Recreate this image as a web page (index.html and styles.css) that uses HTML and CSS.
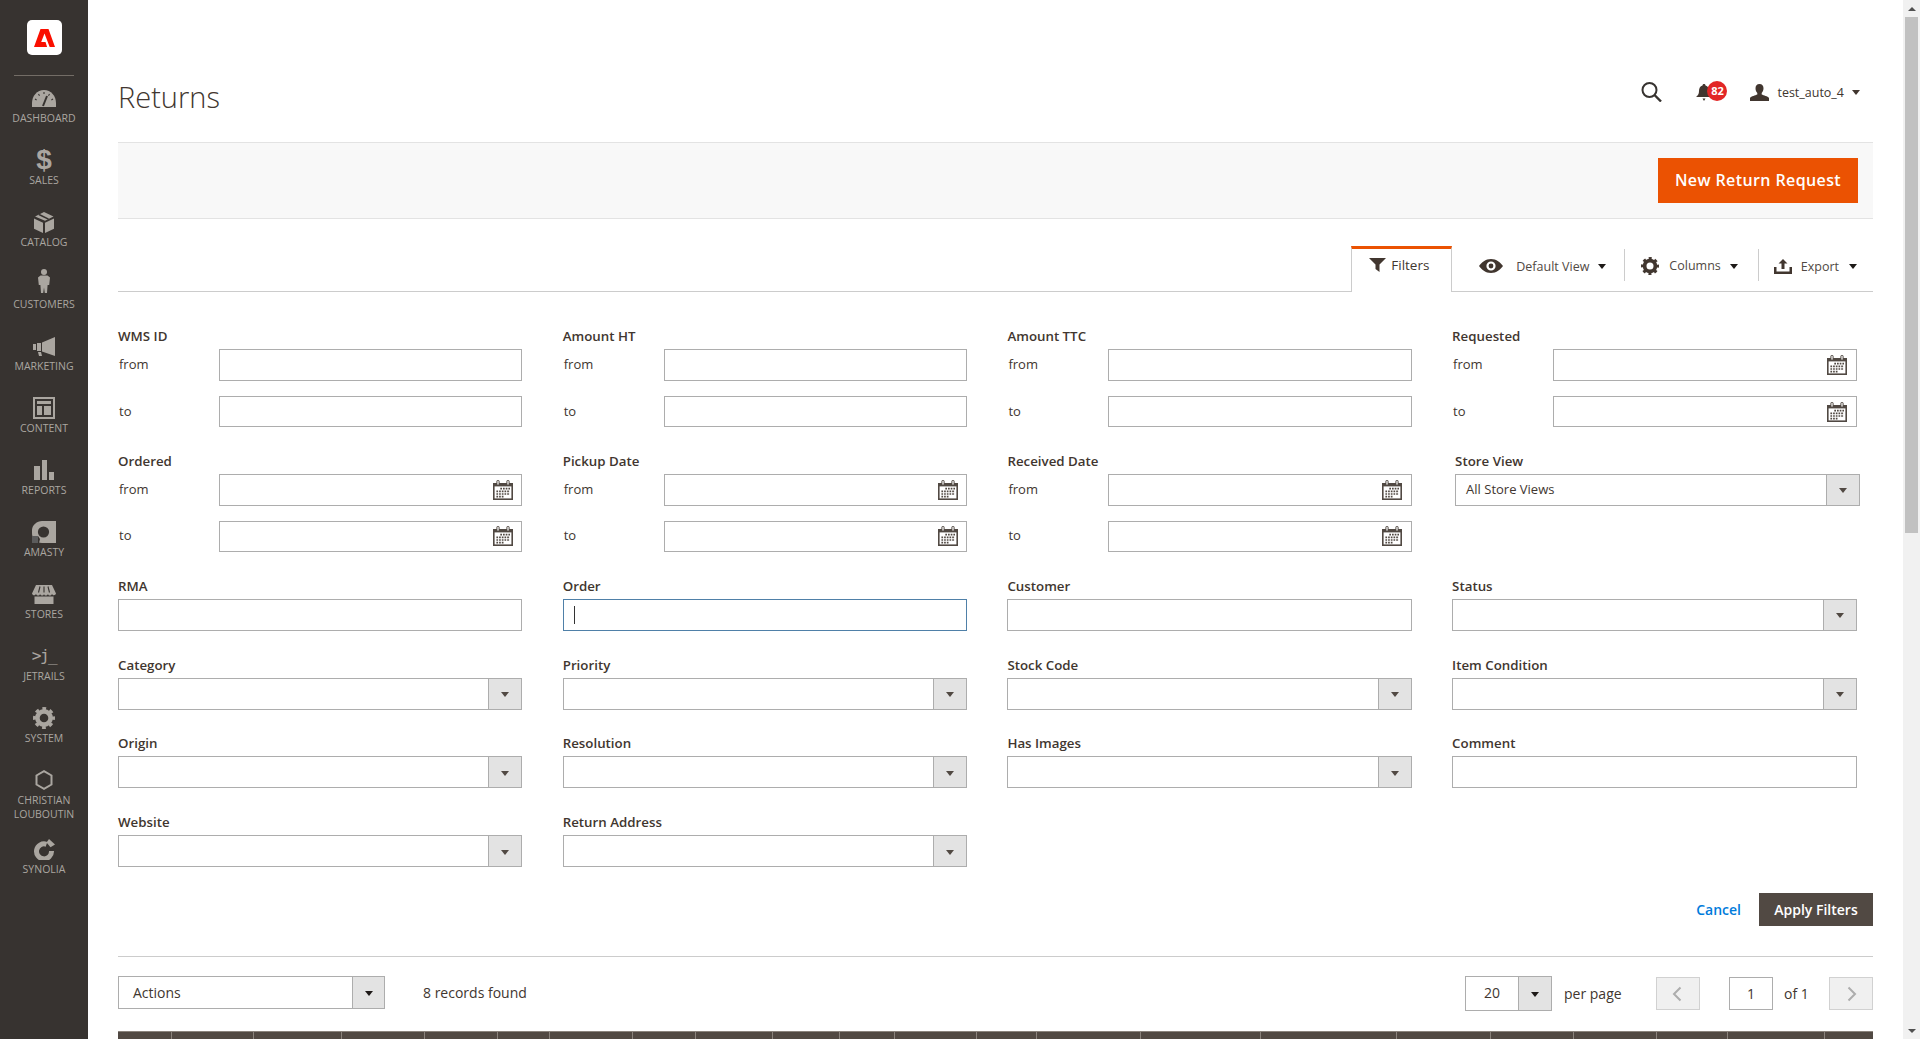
FILE: index.html
```html
<!DOCTYPE html>
<html lang="en">
<head>
<meta charset="utf-8">
<title>Returns</title>
<link rel="stylesheet" href="styles.css">
</head>
<body>
<svg class="defs" width="0" height="0" aria-hidden="true">
  <symbol id="i-cal" viewBox="0 0 20 20">
    <path fill="#514943" d="M0 3h3.4V1.6a1.6 1.6 0 0 1 3.2 0V3h6.8V1.6a1.6 1.6 0 0 1 3.2 0V3H20v17H0z"/>
    <rect x="1.6" y="6.4" width="16.8" height="12" fill="#fff"/>
    <rect x="4.4" y="1" width="1.2" height="3.6" fill="#fff"/>
    <rect x="14.4" y="1" width="1.2" height="3.6" fill="#fff"/>
    <path stroke="#514943" stroke-width="1.7" stroke-dasharray="1.7 1" fill="none" d="M7.3 8.6H17M3.4 11.3H17M3.4 14H17M3.4 16.6H11"/>
  </symbol>
  <symbol id="i-gear" viewBox="0 0 24 24">
    <circle cx="12" cy="12" r="7.2" fill="none" stroke="currentColor" stroke-width="5"/>
    <circle cx="12" cy="12" r="10" fill="none" stroke="currentColor" stroke-width="4" stroke-dasharray="3.95 3.9" stroke-dashoffset="2"/>
  </symbol>
</svg>
<div class="app">
  <nav class="sidebar">
    <div class="logo-wrap">
      <div class="logo">
        <svg width="21" height="18" viewBox="0 0 21 18"><path fill="#fa0f00" d="M6.5 0h8L21 18h-5.3L10.5 4.6 7.2 13h4.3l1.6 5H0z"/></svg>
      </div>
    </div>
    <ul class="nav">
      <li class="nav-item"><span class="nav-icon"><svg width="24" height="17" viewBox="0 0 24 17"><path fill="currentColor" d="M12 0C5 0 0 6 0 13v4h24v-4C24 6 19 0 12 0z"/><path stroke="#373330" stroke-width="1.1" d="M12 2v2M6.5 4l1 1.7M3 9l1.6 1M17.5 4l-1 1.7M21 9l-1.6 1"/><path stroke="#373330" stroke-width="2" d="M11 16l4-10"/></svg></span><span class="nav-label">Dashboard</span></li>
      <li class="nav-item"><span class="nav-icon nav-glyph">$</span><span class="nav-label">Sales</span></li>
      <li class="nav-item"><span class="nav-icon"><svg width="20" height="21" viewBox="0 0 20 21"><path fill="currentColor" d="M0 6.5l9 4.2V21l-9-4.2zM20 6.5l-9 4.2V21l9-4.2zM10 0l9.5 4.6-8.5 4.2L1 4.4z"/><path stroke="#373330" stroke-width="1.6" d="M5 2.5l9.5 4.6"/></svg></span><span class="nav-label">Catalog</span></li>
      <li class="nav-item"><span class="nav-icon"><svg class="nav-person" width="12" height="24" viewBox="0 0 12 24"><circle cx="6" cy="3" r="3" fill="currentColor"/><path fill="currentColor" d="M2.5 6.6h7L12 8.5l-.8 7.5H9.6L9 24H6.8L6 18.5 5.2 24H3l-.6-8H.8L0 8.5z"/></svg></span><span class="nav-label">Customers</span></li>
      <li class="nav-item"><span class="nav-icon"><svg width="22" height="19" viewBox="0 0 22 19"><path fill="currentColor" d="M0 7h3v6H0zM4 6h4v8H4zM9 5.5L22 0v19L9 14.5zM5 15h3l1 4H6z"/></svg></span><span class="nav-label">Marketing</span></li>
      <li class="nav-item"><span class="nav-icon"><svg width="22" height="22" viewBox="0 0 22 22"><path fill="currentColor" fill-rule="evenodd" d="M0 0h22v22H0zM2 2v18h18V2z"/><path fill="currentColor" d="M4 4h14v3H4zM4 9h5v9H4zM11 9h7v9h-7z"/></svg></span><span class="nav-label">Content</span></li>
      <li class="nav-item"><span class="nav-icon"><svg width="20" height="20" viewBox="0 0 20 20"><path fill="currentColor" d="M0 6h6v14H0zM8 0h5v20H8zM15 12h5v8h-5z"/></svg></span><span class="nav-label">Reports</span></li>
      <li class="nav-item"><span class="nav-icon"><svg width="24" height="22" viewBox="0 0 24 22"><path fill="currentColor" d="M10 0h14v22H10C4 22 0 18 0 12V9C0 4 5 0 10 0z"/><circle cx="11.5" cy="11" r="5.6" fill="#373330"/><path fill="#373330" d="M6 15l2 3-1 4H5z"/><rect y="15" width="6" height="7" fill="#5c5c5c"/></svg></span><span class="nav-label">Amasty</span></li>
      <li class="nav-item"><span class="nav-icon"><svg width="24" height="19" viewBox="0 0 24 19"><path fill="currentColor" d="M4 0h16l4 8.5c-.5 2-3 2.4-4 .5-1 2-3.500 2-4 0-1 2-3.500 2-4 0-.5 2-3 2-4 0-.5 2-3 2-4 0-1 2-3.500 1.500-4-.5zM2.500 11.500h19V19h-19z"/><path stroke="#373330" stroke-width="1.100" d="M8 1.500L6.500 7.500M12 1.500v6M16 1.500l1.500 6"/></svg></span><span class="nav-label">Stores</span></li>
      <li class="nav-item"><span class="nav-icon nav-text">&gt;j_</span><span class="nav-label">JetRails</span></li>
      <li class="nav-item"><span class="nav-icon"><svg class="nav-gear" width="22" height="22"><use href="#i-gear"/></svg></span><span class="nav-label">System</span></li>
      <li class="nav-item nav-item-wrap"><span class="nav-icon"><svg width="18" height="20" viewBox="0 0 18 20"><path fill="none" stroke="currentColor" stroke-width="2" d="M9 1.200l7.500 4.300v9L9 18.800l-7.500-4.300v-9z"/></svg></span><span class="nav-label">Christian<br>Louboutin</span></li>
      <li class="nav-item"><span class="nav-icon"><svg width="22" height="21" viewBox="0 0 22 21"><path fill="none" stroke="currentColor" stroke-width="5" d="M13.500 5.300A7.500 7.500 0 1 0 18.500 12"/><path fill="currentColor" d="M16 0l6 5.500-4.500 2.800-4-4.800z"/></svg></span><span class="nav-label">Synolia</span></li>
    </ul>
  </nav>

  <main class="main">
    <header class="page-header">
      <h1 class="page-title">Returns</h1>
      <div class="header-actions">
        <svg class="icon-search" width="22" height="20" viewBox="0 0 22 20"><circle cx="8.500" cy="8" r="7" fill="none" stroke="#373330" stroke-width="2"/><path stroke="#373330" stroke-width="2.400" d="M13.500 13l6.500 6.500"/></svg>
        <span class="bell">
          <svg width="16" height="17" viewBox="0 0 16 17"><path fill="#41362f" d="M8 0c1 0 1.500.6 1.500 1.500C12 2.200 13 4.500 13 7c0 3 1 4.500 3 6H0c2-1.500 3-3 3-6 0-2.500 1-4.800 3.500-5.500C6.500.6 7 0 8 0zM6.500 14.500h3L8 17z"/></svg>
          <span class="badge">82</span>
        </span>
        <svg class="icon-user" width="19" height="17" viewBox="0 0 19 17"><path fill="#41362f" d="M9.500 0c2.700 0 4 1.800 4 4.300 0 2-.8 3.700-1.800 4.700v1.500c2 1 6 1.500 7.300 3.500V17H0v-3c1.300-2 5.300-2.500 7.300-3.500V9c-1-1-1.800-2.700-1.800-4.700C5.500 1.800 6.800 0 9.500 0z"/></svg>
        <span class="user-name">test_auto_4</span>
        <span class="caret caret-user"></span>
      </div>
    </header>

    <section class="page-toolbar">
      <a class="btn-primary">New Return Request</a>
    </section>

    <section class="grid-tabs">
      <div class="tab-active">
        <svg width="17" height="14" viewBox="0 0 17 14"><path fill="#41362f" d="M0 0h17l-6.500 6.500V14l-4-3V6.500z"/></svg>
        <span>Filters</span>
      </div>
      <div class="tool tool-view">
        <svg width="24" height="14" viewBox="0 0 24 14"><path fill="#41362f" fill-rule="evenodd" d="M12 0c5.500 0 9.500 3.500 12 7-2.500 3.500-6.500 7-12 7S2.500 10.500 0 7c2.500-3.500 6.500-7 12-7zm0 2.400a4.600 4.600 0 1 0 0 9.200 4.600 4.600 0 0 0 0-9.200z"/><circle cx="12" cy="7" r="2.400" fill="#41362f"/></svg>
        <span class="tool-text tool-text-view">Default View</span>
        <span class="caret caret-tool"></span>
      </div>
      <div class="tool tool-columns">
        <svg class="tool-gear" width="18" height="18"><use href="#i-gear"/></svg>
        <span class="tool-text tool-text-columns">Columns</span>
        <span class="caret caret-tool"></span>
      </div>
      <div class="tool tool-export">
        <svg width="18" height="15" viewBox="0 0 18 15"><path fill="#41362f" d="M0 8h2.500v4.500h13V8H18v7H0zM9 0l4.500 4.500H10.500V10h-3V4.500H4.500z"/></svg>
        <span class="tool-text tool-text-export">Export</span>
        <span class="caret caret-tool"></span>
      </div>
    </section>

    <form class="filters">
      <div class="filter-grid">
        <div class="field">
          <div class="field-label">WMS ID</div>
          <div class="range-row"><span class="range-name">from</span><input class="input" type="text"></div>
          <div class="range-row range-to"><span class="range-name">to</span><input class="input" type="text"></div>
        </div>
        <div class="field">
          <div class="field-label">Amount HT</div>
          <div class="range-row"><span class="range-name">from</span><input class="input" type="text"></div>
          <div class="range-row range-to"><span class="range-name">to</span><input class="input" type="text"></div>
        </div>
        <div class="field">
          <div class="field-label">Amount TTC</div>
          <div class="range-row"><span class="range-name">from</span><input class="input" type="text"></div>
          <div class="range-row range-to"><span class="range-name">to</span><input class="input" type="text"></div>
        </div>
        <div class="field">
          <div class="field-label">Requested</div>
          <div class="range-row"><span class="range-name">from</span><div class="input date-input"><svg width="20" height="20"><use href="#i-cal"/></svg></div></div>
          <div class="range-row range-to"><span class="range-name">to</span><div class="input date-input"><svg width="20" height="20"><use href="#i-cal"/></svg></div></div>
        </div>

        <div class="field">
          <div class="field-label">Ordered</div>
          <div class="range-row"><span class="range-name">from</span><div class="input date-input"><svg width="20" height="20"><use href="#i-cal"/></svg></div></div>
          <div class="range-row range-to"><span class="range-name">to</span><div class="input date-input"><svg width="20" height="20"><use href="#i-cal"/></svg></div></div>
        </div>
        <div class="field">
          <div class="field-label">Pickup Date</div>
          <div class="range-row"><span class="range-name">from</span><div class="input date-input"><svg width="20" height="20"><use href="#i-cal"/></svg></div></div>
          <div class="range-row range-to"><span class="range-name">to</span><div class="input date-input"><svg width="20" height="20"><use href="#i-cal"/></svg></div></div>
        </div>
        <div class="field">
          <div class="field-label">Received Date</div>
          <div class="range-row"><span class="range-name">from</span><div class="input date-input"><svg width="20" height="20"><use href="#i-cal"/></svg></div></div>
          <div class="range-row range-to"><span class="range-name">to</span><div class="input date-input"><svg width="20" height="20"><use href="#i-cal"/></svg></div></div>
        </div>
        <div class="field field-store">
          <div class="field-label">Store View</div>
          <div class="select"><span class="select-value">All Store Views</span><span class="select-arrow"><span class="caret"></span></span></div>
        </div>

        <div class="field"><div class="field-label">RMA</div><input class="input" type="text"></div>
        <div class="field"><div class="field-label">Order</div><div class="input input-focus"><span class="text-caret"></span></div></div>
        <div class="field"><div class="field-label">Customer</div><input class="input" type="text"></div>
        <div class="field"><div class="field-label">Status</div><div class="select"><span class="select-value"></span><span class="select-arrow"><span class="caret"></span></span></div></div>

        <div class="field"><div class="field-label">Category</div><div class="select"><span class="select-value"></span><span class="select-arrow"><span class="caret"></span></span></div></div>
        <div class="field"><div class="field-label">Priority</div><div class="select"><span class="select-value"></span><span class="select-arrow"><span class="caret"></span></span></div></div>
        <div class="field"><div class="field-label">Stock Code</div><div class="select"><span class="select-value"></span><span class="select-arrow"><span class="caret"></span></span></div></div>
        <div class="field"><div class="field-label">Item Condition</div><div class="select"><span class="select-value"></span><span class="select-arrow"><span class="caret"></span></span></div></div>

        <div class="field"><div class="field-label">Origin</div><div class="select"><span class="select-value"></span><span class="select-arrow"><span class="caret"></span></span></div></div>
        <div class="field"><div class="field-label">Resolution</div><div class="select"><span class="select-value"></span><span class="select-arrow"><span class="caret"></span></span></div></div>
        <div class="field"><div class="field-label">Has Images</div><div class="select"><span class="select-value"></span><span class="select-arrow"><span class="caret"></span></span></div></div>
        <div class="field"><div class="field-label">Comment</div><input class="input" type="text"></div>

        <div class="field"><div class="field-label">Website</div><div class="select"><span class="select-value"></span><span class="select-arrow"><span class="caret"></span></span></div></div>
        <div class="field"><div class="field-label">Return Address</div><div class="select"><span class="select-value"></span><span class="select-arrow"><span class="caret"></span></span></div></div>
      </div>
      <div class="filter-actions">
        <a class="link-cancel">Cancel</a>
        <a class="btn-apply">Apply Filters</a>
      </div>
    </form>

    <section class="pager-row">
      <div class="mass-select"><span class="mass-value">Actions</span><span class="select-arrow"><span class="caret caret-black"></span></span></div>
      <span class="records">8 records found</span>
      <div class="pager">
        <div class="per-page"><span class="per-value">20</span><span class="select-arrow"><span class="caret caret-black"></span></span></div>
        <span class="per-label">per page</span>
        <span class="page-btn page-prev"><svg width="10" height="16" viewBox="0 0 10 16"><path fill="none" stroke="#adadad" stroke-width="2" d="M8.500 1.500L2 8l6.500 6.500"/></svg></span>
        <span class="page-input">1</span>
        <span class="page-of">of 1</span>
        <span class="page-btn page-next"><svg width="10" height="16" viewBox="0 0 10 16"><path fill="none" stroke="#adadad" stroke-width="2" d="M1.500 1.500L8 8l-6.500 6.500"/></svg></span>
      </div>
    </section>

    <div class="table-head">
      <span></span><span></span><span></span><span></span><span></span><span></span><span></span><span></span><span></span><span></span><span></span>
      <span></span><span></span><span></span><span></span><span></span><span></span><span></span><span></span><span></span><span></span><span></span>
    </div>
  </main>

  <aside class="scrollbar" aria-hidden="true">
    <span class="scroll-btn"><span class="scroll-up"></span></span>
    <span class="scroll-thumb"></span>
    <span class="scroll-track"></span>
    <span class="scroll-btn"><span class="scroll-down"></span></span>
  </aside>
</div>
</body>
</html>
```

FILE: styles.css
```css
* { box-sizing: border-box; }
html, body { margin: 0; height: 100%; overflow: hidden; }
body { font-family: "Open Sans", "Noto Sans", sans-serif; font-size: 13px; color: #41362f; background: #fff; }
.defs { position: absolute; }
.app { display: flex; height: 1039px; overflow: hidden; }

/* sidebar */
.sidebar { flex: 0 0 88px; background: #373330; color: #aaa6a0; }
.logo-wrap { height: 76px; margin: 0 14px; padding-top: 20px; border-bottom: 1px solid #736d66; display: flex; justify-content: center; align-items: flex-start; }
.logo { width: 35px; height: 35px; background: #fff; border-radius: 5px; display: flex; align-items: center; justify-content: center; }
.nav { list-style: none; margin: 9px 0 0; padding: 0; }
.nav-item { display: flex; flex-direction: column; align-items: center; padding-bottom: 22px; }
.nav-item-wrap { padding-bottom: 15px; }
.nav-icon { height: 26px; display: flex; align-items: center; justify-content: center; }
.nav-person { margin-bottom: 6px; }
.nav-glyph { font-family: "Liberation Sans", sans-serif; font-weight: 700; font-size: 28px; line-height: 26px; }
.nav-text { font-family: "DejaVu Sans Mono", monospace; font-size: 16px; line-height: 26px; letter-spacing: -1.5px; }
.nav-gear { color: #aaa6a0; }
.nav-label { font-size: 10.5px; line-height: 14px; text-transform: uppercase; text-align: center; white-space: nowrap; }

/* main */
.main { flex: 1 1 auto; min-width: 0; padding: 0 30px; overflow: hidden; }
.page-header { height: 142px; padding: 53px 0 1px; display: flex; align-items: center; justify-content: space-between; }
.page-title { margin: 0; font-size: 29px; font-weight: 300; color: #41362f; line-height: 36px; }
.header-actions { display: flex; align-items: center; padding-right: 13px; margin: 2px 0 12px; }
.icon-search { margin-right: 33px; margin-left: 1px; }
.bell { position: relative; display: flex; margin-right: 38px; }
.badge { position: absolute; left: 11px; top: -3px; width: 20px; height: 20px; border-radius: 50%; background: #e22626; color: #fff; font-size: 11px; font-weight: 700; line-height: 20px; text-align: center; }
.icon-user { margin-right: 8px; }
.user-name { font-size: 12.5px; color: #41362f; }
.caret { display: inline-block; width: 0; height: 0; border-left: 4px solid transparent; border-right: 4px solid transparent; border-top: 5px solid #514943; }
.caret-black { border-top-color: #1e1a18; }
.caret-user { margin-left: 8px; border-top-color: #41362f; }
.caret-tool { border-top-color: #1e1a18; }

.page-toolbar { height: 77px; background: #f8f8f8; border-top: 1px solid #e3e3e3; border-bottom: 1px solid #e3e3e3; display: flex; justify-content: flex-end; align-items: center; padding-right: 15px; }
.btn-primary { width: 200px; height: 45px; padding-bottom: 2px; background: #eb5202; color: #fff; font-size: 16px; font-weight: 600; letter-spacing: .4px; display: flex; align-items: center; justify-content: center; }

.grid-tabs { margin-top: 27px; height: 46px; border-bottom: 1px solid #ccc; display: flex; justify-content: flex-end; align-items: flex-start; padding-right: 16px; }
.tab-active { flex: 0 0 101px; height: 46px; border: 1px solid #ccc; border-top: 3px solid #eb5202; border-bottom: 0; background: #fff; display: flex; align-items: center; padding: 0 0 12px 17px; gap: 5px; font-size: 13.5px; }
.tool { display: flex; align-items: center; height: 32px; margin-top: 3px; padding-top: 2px; }
.tool-view { padding-left: 27px; padding-right: 18px; border-right: 1px solid #ccc; }
.tool-columns { padding-left: 16px; padding-right: 20px; border-right: 1px solid #ccc; }
.tool-export { padding-left: 15px; }
.tool-gear { color: #41362f; }
.tool-text { font-size: 12.5px; color: #514943; }
.tool-text-view { margin: 0 9px 0 13px; }
.tool-text-columns { margin: -2px 9px 0 10px; }
.tool-text-export { margin: 0 10px 0 9px; }

/* filters */
.filters { margin-top: 32px; border-bottom: 1px solid #ccc; padding-bottom: 30px; }
.filter-grid { display: grid; grid-template-columns: repeat(4, 1fr); column-gap: 40.33px; row-gap: 21.86px; padding-right: 16.5px; }
.field { min-width: 0; }
.field-store { margin: 0 -3px 0 3px; }
.field-label { height: 25px; line-height: 24px; font-size: 13.3px; font-weight: 600; color: #41362f; }
.range-row { display: flex; height: 32px; align-items: center; }
.range-to { margin-top: 15px; height: 31px; }
.range-name { flex: 0 0 101px; padding: 0 0 2px 1px; color: #41362f; font-size: 13px; }
.input { display: block; width: 100%; height: 100%; min-height: 31px; margin: 0; padding: 0 10px; border: 1px solid #adadad; border-radius: 0; background: #fff; outline: 0; font: inherit; }
.field > .input { height: 32px; }
.range-row .input { flex: 1 1 auto; min-width: 0; }
.date-input { display: flex; align-items: center; justify-content: flex-end; padding: 0 8.5px 0 0; }
.input-focus { display: flex; align-items: center; border-color: #4f80a8; }
.text-caret { width: 1px; height: 18px; background: #333; }
.select { display: flex; height: 32px; border: 1px solid #adadad; background: #fff; }
.select-value { flex: 1 1 auto; padding-left: 10px; line-height: 28px; font-size: 13px; color: #41362f; }
.select-arrow { flex: 0 0 33px; background: #e3e3e3; border-left: 1px solid #adadad; display: flex; align-items: center; justify-content: center; }
.select-arrow .caret { margin-top: 2px; }

.filter-actions { margin-top: 26px; height: 33px; display: flex; justify-content: flex-end; align-items: center; }
.link-cancel { color: #007bdb; font-size: 14px; font-weight: 600; margin-right: 18px; }
.btn-apply { width: 114px; height: 33px; background: #514943; color: #fff; font-size: 14px; font-weight: 600; display: flex; align-items: center; justify-content: center; }

/* pager */
.pager-row { height: 74px; padding-top: 19px; display: flex; align-items: flex-start; }
.mass-select { width: 267px; height: 33px; display: flex; border: 1px solid #adadad; }
.mass-value { flex: 1 1 auto; padding-left: 14px; line-height: 31px; font-size: 14px; }
.mass-select .select-arrow { flex-basis: 32px; }
.records { margin-left: 38px; font-size: 14px; line-height: 33px; }
.pager { margin-left: auto; display: flex; align-items: flex-start; }
.per-page { width: 87px; height: 35px; display: flex; border: 1px solid #adadad; }
.per-value { flex: 1 1 auto; text-align: center; line-height: 32px; font-size: 14px; }
.per-page .select-arrow { flex-basis: 33px; }
.per-label { margin-left: 12px; width: 92px; font-size: 14px; line-height: 35px; }
.page-btn { width: 44px; height: 33px; margin-top: 1px; background: #f0f0f0; border: 1px solid #d1d1d1; display: flex; align-items: center; justify-content: center; }
.page-prev { padding-right: 2px; }
.page-next { padding-left: 2px; }
.page-input { width: 44px; height: 33px; margin: 1px 0 0 29px; border: 1px solid #adadad; text-align: center; line-height: 32px; font-size: 14px; }
.page-of { margin-left: 11px; width: 45px; line-height: 35px; font-size: 14px; }

.table-head { display: grid; height: 40px; background: #514943; border-top: 1px solid #8a837c; grid-template-columns: 53px 82px 88px 83px 73px 52px 83px 63px 77px 67px 55px 82px 60px 104px 120px 136px 94px 83px 83px 71px 97px 49px; }
.table-head span { border-left: 1px solid #8a837c; }
.table-head span:first-child { border-left: 0; }

/* scrollbar */
.scrollbar { flex: 0 0 17px; background: #f1f1f1; display: flex; flex-direction: column; align-items: center; }
.scroll-btn { flex: 0 0 17px; display: flex; align-items: center; justify-content: center; }
.scroll-up { width: 0; height: 0; border-left: 4px solid transparent; border-right: 4px solid transparent; border-bottom: 4px solid #505050; }
.scroll-down { width: 0; height: 0; border-left: 4px solid transparent; border-right: 4px solid transparent; border-top: 4px solid #505050; }
.scroll-thumb { flex: 0 0 516px; width: 13px; background: #c1c1c1; }
.scroll-track { flex: 1 1 auto; }
```
